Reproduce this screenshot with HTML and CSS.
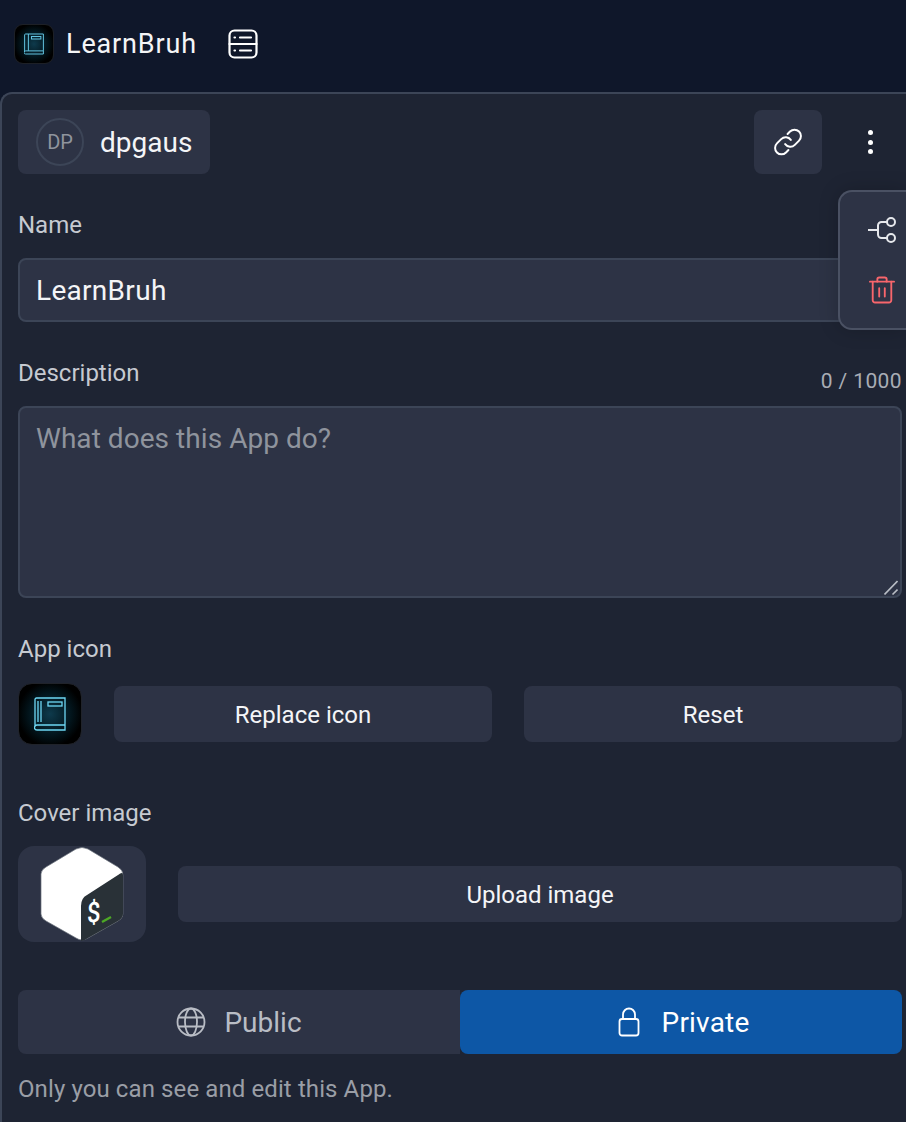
FILE: index.html
```html
<!DOCTYPE html>
<html lang="en">
<head>
  <meta charset="UTF-8" />
  <meta name="viewport" content="width=device-width, initial-scale=1.0"/>
  <title>LearnBruh - App settings</title>
  <link rel="stylesheet" href="styles.css">
</head>
<body>
  <header class="topbar">
    <span class="app-icon app-icon-small">
      <svg viewBox="0 0 32 34" width="20" height="22" fill="none" stroke="#62c4e0" stroke-width="1.600">
        <path d="M1 30V2.500A1.500 1.500 0 0 1 2.500 1H31V28H2.500A2.500 2.500 0 0 0 2.500 33H31V28"/>
        <path d="M7 1V28"/>
        <rect x="12" y="5" width="15" height="4"/>
      </svg>
    </span>
    <span class="app-title">LearnBruh</span>
    <button class="server-btn" aria-label="Layout">
      <svg viewBox="0 0 30 30" width="30" height="30" fill="none" stroke="#fff" stroke-width="2.200" stroke-linecap="round">
        <rect x="1.500" y="1.500" width="27" height="27" rx="5"/>
        <path d="M1.500 15H28.500"/>
        <path d="M12 8.500H23M12 21.500H23"/>
        <path d="M6.500 8.500H7M6.500 21.500H7"/>
      </svg>
    </button>
  </header>

  <main class="panel">
    <div class="owner-row">
      <div class="owner-chip">
        <span class="avatar">DP</span>
        <span class="owner-name">dpgaus</span>
      </div>
      <div class="owner-actions">
        <button class="link-btn" aria-label="Copy link">
          <svg viewBox="0 0 24 24" width="34" height="34" fill="none" stroke="#fff" stroke-width="1.400" stroke-linecap="round" stroke-linejoin="round">
            <path d="M10 13.500a4.500 4.500 0 0 0 6.800.5l3-3a4.500 4.500 0 0 0-6.400-6.400l-1.700 1.700"/>
            <path d="M14 10.500a4.500 4.500 0 0 0-6.800-.5l-3 3a4.500 4.500 0 0 0 6.400 6.400l1.700-1.700"/>
          </svg>
        </button>
        <button class="more-btn" aria-label="More">
          <span></span><span></span><span></span>
        </button>
      </div>
    </div>

    <div class="menu">
      <svg viewBox="0 0 28 26" width="28" height="26" fill="none" stroke="#e6e8ec" stroke-width="2">
        <path d="M0 13H10M19 5H13.500A3.500 3.500 0 0 0 10 8.500V17.500A3.500 3.500 0 0 0 13.500 21H19"/>
        <circle cx="23" cy="5" r="4"/>
        <circle cx="23" cy="21" r="4"/>
      </svg>
      <svg class="trash" viewBox="0 0 28 30" width="26" height="28" fill="none" stroke="#f8666c" stroke-width="2" stroke-linejoin="round" stroke-linecap="round">
        <path d="M1 6H27"/>
        <path d="M9 6V3.500A2 2 0 0 1 11 1.500H17A2 2 0 0 1 19 3.500V6"/>
        <path d="M4 6V26A2.500 2.500 0 0 0 6.500 28.500H21.500A2.500 2.500 0 0 0 24 26V6"/>
        <path d="M11 13V22M17 13V22"/>
      </svg>
    </div>

    <label class="field-label name-label" for="name">Name</label>
    <input class="text-input" id="name" type="text" value="LearnBruh">

    <div class="desc-head">
      <label class="field-label" for="desc">Description</label>
      <span class="counter">0 / 1000</span>
    </div>
    <div class="area-wrap">
      <textarea class="text-area" id="desc" placeholder="What does this App do?"></textarea>
      <svg class="grip" viewBox="0 0 14 15" width="14" height="15" fill="none" stroke="#b9bdc5" stroke-width="1.600">
        <path d="M0.500 14.500L13.500 1"/>
        <path d="M8.500 14.500L13.500 9.500"/>
      </svg>
    </div>

    <div class="field-label icon-label">App icon</div>
    <div class="icon-row">
      <span class="app-icon app-icon-large">
        <svg viewBox="0 0 32 34" width="32" height="34" fill="none" stroke="#6ed8f4" stroke-width="1.300">
          <path d="M1 30V2.500A1.500 1.500 0 0 1 2.500 1H31V28H3A2.500 2.500 0 0 0 3 33H31V28"/>
          <path d="M7 4V25M4 4V25"/>
          <rect x="14" y="5" width="14" height="4"/>
        </svg>
      </span>
      <button class="soft-btn">Replace icon</button>
      <button class="soft-btn">Reset</button>
    </div>

    <div class="field-label cover-label">Cover image</div>
    <div class="cover-row">
      <div class="cover-box">
        <svg viewBox="0 0 84 96" width="84" height="96">
          <path d="M36 3Q42 0 48 3L78 21Q83 24 83 29V68Q83 72 78 75L48 92Q42 96 36 92L6 75Q1 72 1 68V28Q1 24 6 21Z" fill="#fff" stroke="#6a717b" stroke-width="0.700"/>
          <path d="M83 29V68Q83 72 78 75L48 92Q44 95 41 95V60Q41 52 47 49L78 29Q83 25 83 29Z" fill="#293137"/>
          <text class="bash-sign" transform="translate(47 77) skewY(-8) scale(0.85 1)">$</text>
          <path d="M62 76L71 71" stroke="#4da825" stroke-width="2.400"/>
        </svg>
      </div>
      <button class="soft-btn upload-btn">Upload image</button>
    </div>

    <div class="visibility">
      <button class="vis-btn">
        <svg viewBox="0 0 30 30" width="30" height="30" fill="none" stroke="#b9bdc5" stroke-width="1.800">
          <circle cx="15" cy="15" r="13.500"/>
          <ellipse cx="15" cy="15" rx="6" ry="13.500"/>
          <path d="M2.500 10.500H27.500M2.500 19.500H27.500"/>
        </svg>
        Public
      </button>
      <button class="vis-btn vis-active">
        <svg viewBox="0 0 22 30" width="22" height="30" fill="none" stroke="#fff" stroke-width="1.800">
          <rect x="1.500" y="12" width="19" height="16.500" rx="2.500"/>
          <path d="M5 12V7.500a6 6 0 0 1 12 0V12"/>
        </svg>
        Private
      </button>
    </div>
    <p class="help-text">Only you can see and edit this App.</p>
  </main>
</body>
</html>
```
FILE: styles.css
```css
* {
  box-sizing: border-box;
}

html, body {
  height: 100%;
}

body {
  margin: 0;
  overflow: hidden;
  background: #0f172a;
  font-family: Roboto, "Liberation Sans", sans-serif;
  color: #fff;
}

button {
  font-family: inherit;
  border: none;
  cursor: pointer;
}

.topbar {
  height: 92px;
  display: flex;
  align-items: center;
  padding: 0 0 4px 14px;
  background: #0f172a;
}

.app-icon {
  display: flex;
  align-items: center;
  justify-content: center;
  background: radial-gradient(circle, #0e3a4c 0%, #02141b 50%, #000 75%);
  flex-shrink: 0;
}

.app-icon-small {
  width: 40px;
  height: 40px;
  border-radius: 9px;
  border: 1px solid #1d2026;
}

.app-icon-large {
  width: 64px;
  height: 62px;
  border-radius: 14px;
  border: 1px solid #20232a;
}

.app-title {
  margin-left: 12px;
  font-size: 27px;
  letter-spacing: 0.85px;
  color: #f4f5f7;
}

.server-btn {
  margin-left: 31px;
  padding: 0;
  width: 30px;
  height: 30px;
  background: none;
}

.panel {
  position: relative;
  height: 1030px;
  padding: 16px 4px 0 16px;
  background: #1e2433;
  border: 2px solid #3c4557;
  border-right: none;
  border-bottom: none;
  border-radius: 12px 0 0 0;
}

.owner-row {
  display: flex;
  justify-content: space-between;
  align-items: center;
}

.owner-chip {
  display: flex;
  align-items: center;
  gap: 16px;
  width: 192px;
  height: 64px;
  padding-left: 18px;
  background: #2d3345;
  border-radius: 8px;
}

.avatar {
  width: 48px;
  height: 48px;
  display: flex;
  align-items: center;
  justify-content: center;
  border: 2px solid #3c4557;
  border-radius: 50%;
  font-size: 20px;
  color: #8f949d;
}

.owner-name {
  font-size: 28px;
  color: #f4f5f7;
}

.owner-actions {
  display: flex;
  align-items: center;
  gap: 44px;
  margin-right: 28px;
}

.link-btn {
  width: 68px;
  height: 64px;
  padding: 0;
  display: flex;
  align-items: center;
  justify-content: center;
  background: #2d3345;
  border-radius: 8px;
}

.more-btn {
  width: 8px;
  display: flex;
  flex-direction: column;
  align-items: center;
  gap: 4.5px;
  padding: 0;
  background: none;
}

.more-btn span {
  width: 5px;
  height: 5px;
  background: #fff;
  border-radius: 50%;
}

.menu {
  position: absolute;
  top: 96px;
  left: 836px;
  z-index: 2;
  display: flex;
  flex-direction: column;
  align-items: flex-start;
  gap: 33px;
  width: 68px;
  height: 140px;
  padding: 25px 0 0 28px;
  background: #2d3345;
  border: 2px solid #4a5163;
  border-right: none;
  border-radius: 14px 0 0 14px;
  box-shadow: 0 0 20px rgba(0, 0, 0, 0.2);
}

.trash {
  flex-shrink: 0;
  margin-left: 1px;
}

.field-label {
  display: block;
  font-size: 24px;
  line-height: 32px;
  color: #c6cad1;
}

.name-label {
  margin-top: 35px;
}

.text-input, .text-area {
  display: block;
  width: 100%;
  font-family: inherit;
  font-size: 28px;
  letter-spacing: 0.3px;
  color: #f4f5f7;
  background: #2d3345;
  border: 2px solid #3c4557;
  border-radius: 8px;
  outline: none;
}

.text-input {
  height: 64px;
  margin-top: 17px;
  padding: 0 16px;
}

.area-wrap {
  position: relative;
  margin-top: 9px;
}

.text-area {
  height: 192px;
  padding: 14px 16px;
  resize: none;
}

.text-area::placeholder {
  letter-spacing: 0.05px;
  color: #8f949d;
}

.grip {
  position: absolute;
  right: 4px;
  bottom: 3px;
}

.desc-head {
  display: flex;
  justify-content: space-between;
  margin-top: 35px;
}

.counter {
  margin-top: 8px;
  font-size: 21px;
  line-height: 32px;
  letter-spacing: 0.4px;
  color: #a9adb5;
}

.icon-label {
  margin-top: 35px;
}

.icon-row {
  display: flex;
  align-items: center;
  gap: 32px;
  margin-top: 18px;
}

.soft-btn {
  height: 56px;
  flex: 1;
  padding: 2px 0 0;
  font-size: 24px;
  color: #f4f5f7;
  background: #2d3345;
  border-radius: 8px;
}

.cover-label {
  margin-top: 52px;
}

.cover-row {
  display: flex;
  align-items: center;
  gap: 32px;
  margin-top: 17px;
}

.cover-box {
  width: 128px;
  height: 96px;
  flex-shrink: 0;
  display: flex;
  justify-content: center;
  background: #2d3345;
  border-radius: 16px;
}

.bash-sign {
  font-family: Roboto, sans-serif;
  font-size: 28px;
  font-weight: 500;
  fill: #fff;
}

.visibility {
  display: flex;
  margin-top: 48px;
}

.vis-btn {
  flex: 0 0 50%;
  height: 64px;
  padding: 0;
  display: flex;
  align-items: center;
  justify-content: center;
  gap: 18px;
  font-size: 28px;
  color: #b9bdc5;
  background: #2d3345;
}

.vis-btn:first-child {
  border-radius: 8px 0 0 8px;
}

.vis-active {
  gap: 22px;
  padding-left: 5px;
  letter-spacing: 0.2px;
  color: #fff;
  background: #0d57a6;
  border-radius: 8px;
}

.help-text {
  margin: 19px 0 0;
  font-size: 24px;
  line-height: 32px;
  letter-spacing: 0.1px;
  color: #9a9ea6;
}
```
